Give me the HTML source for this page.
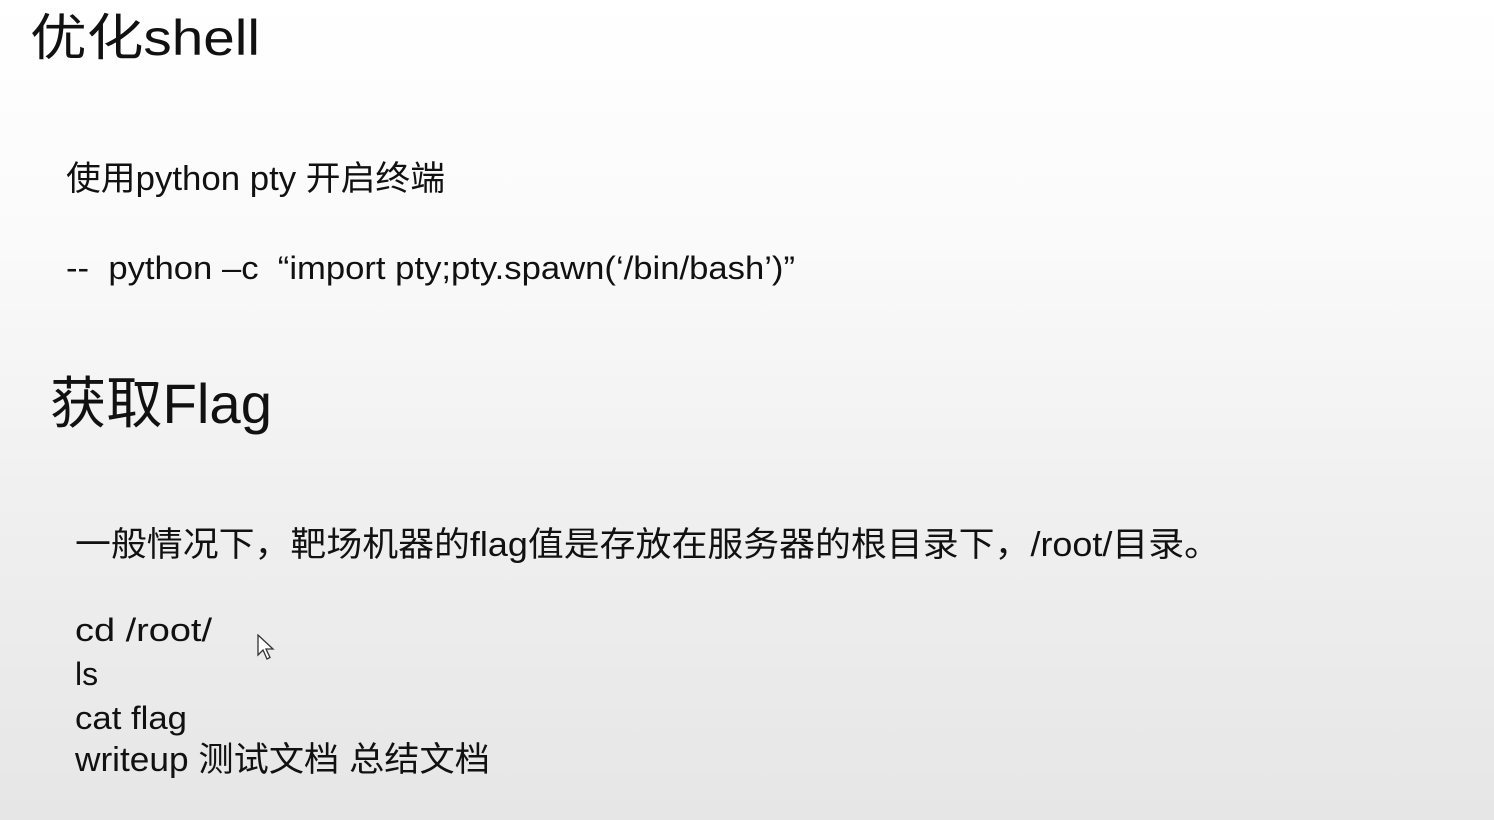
<!DOCTYPE html>
<html><head><meta charset="utf-8"><style>
html,body{margin:0;padding:0}
body{width:1494px;height:820px;overflow:hidden;position:relative;
background:linear-gradient(to bottom,#ffffff 0%,#fafafa 30%,#f0f0f0 60%,#e6e6e6 100%);
font-family:"Liberation Sans","Noto Sans CJK SC",sans-serif;color:#111}
.t{position:absolute;white-space:nowrap;transform-origin:0 0;line-height:1}
</style></head><body>
<div class="t" data-w="230" style="left:30px;top:13px;font-size:50px">优化shell</div>
<div class="t" data-w="379" style="left:66px;top:162px;font-size:34px">使用python pty 开启终端</div>
<div class="t" data-w="729" style="left:66px;top:252px;font-size:32px">--&nbsp; python –c &nbsp;“import pty;pty.spawn(‘/bin/bash’)”</div>
<div class="t" data-w="222" style="left:50px;top:376px;font-size:56px">获取Flag</div>
<div class="t" data-w="1145" style="left:75px;top:528px;font-size:34px">一般情况下，靶场机器的flag值是存放在服务器的根目录下，/root/目录。</div>
<div class="t" data-w="137" style="left:75px;top:614px;font-size:32px">cd /root/</div>
<div class="t" style="left:75px;top:658px;font-size:32px">ls</div>
<div class="t" data-w="112" style="left:75px;top:702px;font-size:32px">cat flag</div>
<div class="t" data-w="415" style="left:75px;top:743px;font-size:34px">writeup 测试文档 总结文档</div>
<svg style="position:absolute;left:257px;top:634px" width="20" height="28" viewBox="0 0 20 28"><path d="M1 1 L1 21 L6 16 L10 25 L13 23.5 L9 15 L16 15 Z" fill="#fff" stroke="#333" stroke-width="1.3"/></svg>
<script>
document.querySelectorAll('.t[data-w]').forEach(function(e){var w=e.getBoundingClientRect().width;var s=(+e.dataset.w)/w;e.style.transform='scaleX('+s+')';});
</script>
</body></html>
